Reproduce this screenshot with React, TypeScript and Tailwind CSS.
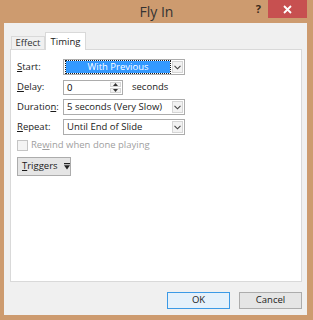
import React from 'react';

const Chevron: React.FC = () => (
  <svg width="7" height="5" viewBox="0 0 7 5" className="block">
    <path d="M0.5 0.8 L3.5 3.8 L6.5 0.8" fill="none" stroke="#444" strokeWidth="1.1" />
  </svg>
);

const Combo: React.FC<{ value: string; selected?: boolean }> = ({ value, selected }) => (
  <div className="w-[122px] h-[16px] flex border border-[#acacac] bg-white">
    <div className="flex-1 flex items-center px-[2px] min-w-0">
      {selected ? (
        <div className="w-full h-[12px] bg-[#3399ff] outline outline-1 outline-dotted outline-[#1a1a1a] text-white text-center leading-[12px] whitespace-nowrap">
          {value}
        </div>
      ) : (
        <span className="leading-[14px] pl-[1px] text-[#1a1a1a] whitespace-nowrap">{value}</span>
      )}
    </div>
    <div className="w-[11px] my-[1px] mr-[1px] border border-[#d5d5d5] bg-[#f2f2f2] flex items-center justify-center">
      <Chevron />
    </div>
  </div>
);

const Row: React.FC<{ label: React.ReactNode; children: React.ReactNode }> = ({ label, children }) => (
  <div className="flex items-center h-[16px] mb-[4px]">
    <div className="w-[46px] text-[#1a1a1a] whitespace-nowrap">{label}</div>
    {children}
  </div>
);

export default function App() {
  return (
    <div
      className="w-[313px] h-[320px] bg-[#cd9b6f] flex flex-col text-[9.5px]"
      style={{ fontFamily: '"Open Sans", "Noto Sans", sans-serif' }}
    >
      <div className="h-[23px] grid grid-cols-[1fr_auto_1fr]">
        <div />
        <div className="text-[14px] text-[#333] leading-[24px]">Fly In</div>
        <div className="flex justify-end items-start pr-[6px]">
          <span className="text-[11px] font-bold text-[#3a2a1a] leading-[17px] mr-[7px]">?</span>
          <div className="w-[39px] h-[18px] bg-[#c75050] flex items-center justify-center">
            <svg width="9" height="9" viewBox="0 0 9 9">
              <path d="M1 1 L8 8 M8 1 L1 8" stroke="#fff" strokeWidth="1.8" />
            </svg>
          </div>
        </div>
      </div>

      <div className="ml-[4px] mr-[6px] mb-[5px] flex-1 bg-[#f0f0f0] flex flex-col pt-[9px] pl-[6px] pr-[5px] pb-[6px]">
        <div className="flex items-end h-[17px] ml-[1px]">
          <div className="w-[34px] h-[13px] border border-b-0 border-[#d9d9d9] bg-[#f0f0f0] text-[#333] flex items-center justify-center leading-[12px] whitespace-nowrap">
            Effect
          </div>
          <div className="w-[41px] h-[18px] -mb-px relative z-10 border border-b-0 border-[#d9d9d9] bg-white text-[#1a1a1a] flex items-center justify-center leading-[14px] whitespace-nowrap">
            Timing
          </div>
        </div>

        <div className="flex-1 border border-[#d9d9d9] bg-white pt-[9px] pl-[6px]">
          <Row label={<><u>S</u>tart:</>}>
            <Combo value="With Previous" selected />
          </Row>
          <Row label={<><u>D</u>elay:</>}>
            <div className="w-[60px] h-[15px] flex border border-[#acacac] bg-white">
              <span className="flex-1 pl-[3px] leading-[13px]">0</span>
              <div className="w-[11px] my-[1px] mr-[1px] flex flex-col gap-px">
                <div className="flex-1 border border-[#d5d5d5] bg-[#f2f2f2] flex items-center justify-center">
                  <svg width="5" height="3" viewBox="0 0 5 3"><path d="M0 3 L2.5 0 L5 3Z" fill="#333" /></svg>
                </div>
                <div className="flex-1 border border-[#d5d5d5] bg-[#f2f2f2] flex items-center justify-center">
                  <svg width="5" height="3" viewBox="0 0 5 3"><path d="M0 0 L2.5 3 L5 0Z" fill="#333" /></svg>
                </div>
              </div>
            </div>
            <span className="ml-[9px] text-[#1a1a1a]">seconds</span>
          </Row>
          <Row label={<>Duratio<u>n</u>:</>}>
            <Combo value="5 seconds (Very Slow)" />
          </Row>
          <Row label={<><u>R</u>epeat:</>}>
            <Combo value="Until End of Slide" />
          </Row>

          <div className="flex items-center h-[13px] mt-[2px]">
            <div className="w-[11px] h-[11px] border border-[#c5c5c5] bg-[#f4f4f4]" />
            <span className="ml-[3px] text-[#a0a0a0] whitespace-nowrap">Re<u>w</u>ind when done playing</span>
          </div>

          <div className="mt-[5px] w-[54px] h-[19px] border border-[#acacac] bg-[#e5e5e5] flex items-center pl-[4px] text-[#1a1a1a] whitespace-nowrap">
            <span><u>T</u>riggers</span>
            <svg width="6" height="7" viewBox="0 0 6 7" className="ml-[6px] shrink-0">
              <rect x="0" y="0" width="6" height="1.2" fill="#222" />
              <path d="M0 2.3 L6 2.3 L3 6.5Z" fill="#222" />
            </svg>
          </div>
        </div>

        <div className="mt-[10px] h-[17px] flex justify-end gap-[9px]">
          <div className="w-[63px] h-[17px] border border-[#3c9ae6] bg-[#e5f1fb] flex items-center justify-center text-[#222]">
            OK
          </div>
          <div className="w-[63px] h-[17px] border border-[#acacac] bg-[#e5e5e5] flex items-center justify-center text-[#222]">
            Cancel
          </div>
        </div>
      </div>
    </div>
  );
}
